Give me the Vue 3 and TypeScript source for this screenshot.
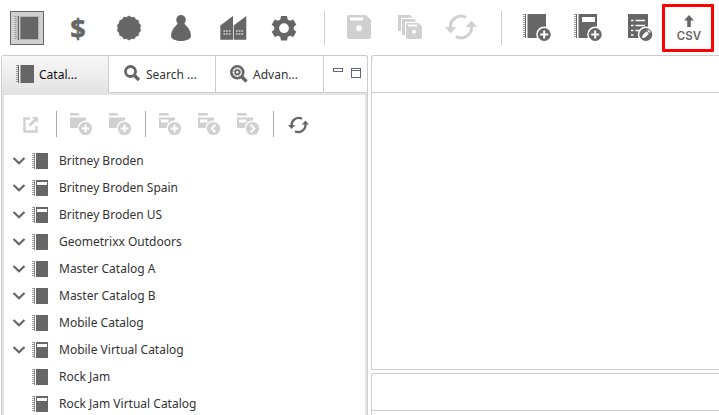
<script setup lang="ts">
interface CatalogNode {
  name: string
  virtual: boolean
  expandable: boolean
}

const catalogs: CatalogNode[] = [
  { name: 'Britney Broden', virtual: false, expandable: true },
  { name: 'Britney Broden Spain', virtual: true, expandable: true },
  { name: 'Britney Broden US', virtual: true, expandable: true },
  { name: 'Geometrixx Outdoors', virtual: false, expandable: true },
  { name: 'Master Catalog A', virtual: false, expandable: true },
  { name: 'Master Catalog B', virtual: false, expandable: true },
  { name: 'Mobile Catalog', virtual: false, expandable: true },
  { name: 'Mobile Virtual Catalog', virtual: true, expandable: true },
  { name: 'Rock Jam', virtual: false, expandable: false },
  { name: 'Rock Jam Virtual Catalog', virtual: true, expandable: false },
]

const scallops: string = Array.from({ length: 28 }, (_, i) => {
  const radius = i % 2 === 0 ? 12.2 : 11
  const angle = (i * Math.PI) / 14
  return `${(17 + radius * Math.sin(angle)).toFixed(2)},${(17 - radius * Math.cos(angle)).toFixed(2)}`
}).join(' ')
</script>

<template>
  <div class="app">
    <header class="toolbar">
      <div class="group">
        <button class="tool selected">
          <svg width="32" height="32" viewBox="0 0 32 32">
            <path class="spiral" d="M4.500 4v24" />
            <path d="M6 4h1v24H6zM9 4h19v24H9z" fill="#b4b4b4" />
            <path d="M7 4h1v24H7zM9.500 5H27v22H9.500z" />
          </svg>
        </button>
        <button class="tool dollar">$</button>
        <button class="tool">
          <svg width="34" height="34" viewBox="0 0 34 34"><polygon :points="scallops" stroke="#666" stroke-width=".3" stroke-linejoin="round" /></svg>
        </button>
        <button class="tool">
          <svg width="34" height="34" viewBox="0 0 34 34">
            <circle cx="18" cy="8.800" r="4.800" />
            <path d="M15 11h6q.3 2.200 2.200 3.800c3 2.500 4.800 6.500 4.800 10.200 0 2.400-3.800 5-10 5s-10-2.600-10-5c0-3.700 1.800-7.700 4.800-10.200q1.900-1.600 2.200-3.800z" />
          </svg>
        </button>
        <button class="tool">
          <svg width="34" height="34" viewBox="0 0 34 34">
            <path d="M6.300 14.500 19 5v23.800H6.300zM19.700 14.500 32.300 5v23.800H19.700z" />
            <path d="M9.500 20h7m-7 3h7M22 20h7m-7 3h7" stroke="#d8d8d8" stroke-width="1.400" stroke-dasharray="1.700 1" />
          </svg>
        </button>
        <button class="tool">
          <svg width="34" height="34" viewBox="0 0 34 34">
            <path fill-rule="evenodd" d="M16 5h6l.7 3.400 2.300 1.300 3.300-1.100 3 5.200-2.600 2.200v2.500l2.600 2.300-3 5.100-3.300-1.100-2.300 1.300L22 29.400h-6l-.7-3.300-2.300-1.300-3.300 1.100-3-5.100 2.600-2.300V16l-2.600-2.200 3-5.200L13 9.700l2.300-1.300zM19 12.300a4.900 4.900 0 1 0 0 9.800 4.900 4.900 0 0 0 0-9.800z" />
          </svg>
        </button>
      </div>
      <i class="divider" />
      <div class="group disabled">
        <button class="tool">
          <svg width="34" height="34" viewBox="0 0 34 34">
            <path fill-rule="evenodd" d="M7 4h17l5 5v17a2 2 0 0 1-2 2H7a2 2 0 0 1-2-2V6a2 2 0 0 1 2-2zM8 6.500v3h13v-3zM17 14.300a3 3 0 1 0 0 6 3 3 0 0 0 0-6z" />
          </svg>
        </button>
        <button class="tool">
          <svg width="34" height="34" viewBox="0 0 34 34">
            <path d="M5 4h12l3 2.700H8V20H5zM9 8h12l3 2.700H12V24H9z" />
            <path fill-rule="evenodd" d="M14 12h11.500l3.500 3.500V27l-1 1H14l-1-1V13zM15 13.500v2h9v-2zM21 18.700a2 2 0 1 0 0 4 2 2 0 0 0 0-4z" />
          </svg>
        </button>
        <button class="tool">
          <svg width="34" height="34" viewBox="0 0 34 34">
            <path d="M6.500 17A10.500 10.500 0 0 1 22 6.500M27.500 15A10.500 10.500 0 0 1 12 25.500" class="arc" stroke-width="3" />
            <path d="M.8 16h11.500l-5.700 6.200zM21.700 16h11.500L27.500 9.700z" />
          </svg>
        </button>
      </div>
      <i class="divider second" />
      <div class="group">
        <button class="tool">
          <svg width="34" height="34" viewBox="0 0 34 34">
            <path class="spiral" d="M4 3v24" /><path d="M5 3h1v24H5zM7.500 3H26v24H7.500z" />
            <circle cx="24.200" cy="23.500" r="8" fill="#fff" /><circle cx="24.200" cy="23.500" r="6.500" />
            <path d="M20.200 23.500h8M24.200 19.500v8" stroke="#fff" stroke-width="2" />
          </svg>
        </button>
        <button class="tool">
          <svg width="34" height="34" viewBox="0 0 34 34">
            <path class="spiral" d="M4 3v24" /><path d="M5 3h1v24H5zM7.500 3H26v24H7.500z" />
            <path d="M11 6h13v5H11z" fill="#fff" />
            <circle cx="24.200" cy="23.500" r="8" fill="#fff" /><circle cx="24.200" cy="23.500" r="6.500" />
            <path d="M20.200 23.500h8M24.200 19.500v8" stroke="#fff" stroke-width="2" />
          </svg>
        </button>
        <button class="tool">
          <svg width="34" height="34" viewBox="0 0 34 34">
            <path d="M6 3h20v24H6z" />
            <path d="M9 9.500h2.500m2 0H23M9 14.500h2.500m2 0H23M9 19.500h2.500m2 0H18M9 24h2.500" stroke="#fff" stroke-width="1.400" />
            <circle cx="23.800" cy="23.500" r="8" fill="#fff" /><circle cx="23.800" cy="23.500" r="6.500" />
            <path d="m20 27.300.7-3.200 3.800-3.800 2.500 2.500-3.800 3.800zM25.200 19.600l1-1 2.500 2.500-1 1z" fill="#fff" />
          </svg>
        </button>
      </div>
      <button class="csv">
        <svg width="12" height="12" viewBox="0 0 12 12"><path d="M6 0l5 5.500H7.800V12H4.200V5.500H1z" /></svg>
        <span>CSV</span>
      </button>
    </header>

    <main class="workspace">
      <section class="navigator">
        <nav class="tabs">
          <div class="tab active">
            <svg width="19" height="18" viewBox="0 0 19 18"><path class="spiral" d="M1 0v18" /><path d="M2 0h1v18H2zM4.500 0H18v18H4.500z" /></svg>
            <span>Catal...</span>
          </div>
          <div class="tab">
            <svg width="17" height="17" viewBox="0 0 17 17"><circle cx="6.500" cy="6.500" r="5" fill="none" stroke="#666" stroke-width="2.800" /><path d="m10 10 5 5" stroke="#666" stroke-width="3.400" /></svg>
            <span>Search ...</span>
          </div>
          <div class="tab advanced">
            <svg width="18" height="18" viewBox="0 0 18 18"><circle cx="7.300" cy="7.300" r="6" fill="none" stroke="#666" stroke-width="2.600" /><circle cx="7.300" cy="7.300" r="2.100" fill="none" stroke="#666" stroke-width="1.700" /><circle cx="7.300" cy="7.300" r="3.500" fill="none" stroke="#666" stroke-width="1" stroke-dasharray="1.300 1.500" /><path d="m11.500 11.500 5 5" stroke="#666" stroke-width="3.400" /></svg>
            <span>Advan...</span>
          </div>
          <div class="window-buttons">
            <i class="minimize" />
            <i class="maximize" />
          </div>
        </nav>
        <div class="content">
          <div class="actions">
            <svg class="open" width="16" height="16" viewBox="0 0 16 16"><path d="M7 1.500H1.500v13h12V9" fill="none" stroke="#d0d0d0" stroke-width="2.400" /><path d="M9 0h6v6l-2-2-5.500 5.500-2-2L11 2z" /></svg>
            <i class="split first" />
            <svg v-for="n in 2" :key="n" class="folder" width="23" height="23" viewBox="0 0 23 23">
              <path d="M0 0h8l2 2.500H0zM0 4.500h16V11l-6 4H0z" />
              <circle cx="15.500" cy="15.500" r="8" fill="#fff" /><circle cx="15.500" cy="15.500" r="6.600" />
              <path d="M11.700 15.500h7.600M15.500 11.700v7.600" stroke="#fff" stroke-width="2" />
            </svg>
            <i class="split" />
            <svg v-for="mark in ['M11.700 15.500h7.600M15.500 11.700v7.600', 'm17.300 11.700-3.700 3.800 3.700 3.800', 'm13.700 11.700 3.700 3.800-3.700 3.800']" :key="mark" class="folder" width="23" height="23" viewBox="0 0 23 23">
              <path d="M0 0h9l1.500 2.500H0zM0 4.500h16V11l-6 4H0z" />
              <path d="M2 6.500h7.500v3H2z" fill="#fff" />
              <circle cx="15.500" cy="15.500" r="8" fill="#fff" /><circle cx="15.500" cy="15.500" r="6.600" />
              <path :d="mark" fill="none" stroke="#fff" stroke-width="2" />
            </svg>
            <i class="split last" />
            <svg class="refresh" width="21" height="18" viewBox="0 0 21 18"><path d="M3.600 10A7.200 7.200 0 0 1 14 2.700M17.400 8A7.200 7.200 0 0 1 7 15.300" class="arc" stroke-width="2.200" /><path d="M0 9h7.200l-3.600 4zM13.800 8.500H21l-3.600-4z" /></svg>
          </div>
          <ul class="tree">
            <li v-for="item in catalogs" :key="item.name">
              <svg class="chevron" width="14" height="10" viewBox="0 0 14 10"><path v-if="item.expandable" d="m1.500 2 5.500 5.300L12.500 2" /></svg>
              <svg class="book" width="16" height="16" viewBox="0 0 16 16">
                <path class="spiral" d="M1 0v16" /><path d="M2 0h1v16H2z" fill="#8a8a8a" /><path d="M4 0h12v16H4z" />
                <path v-if="item.virtual" d="M5 2h10v3H5z" fill="#fff" />
              </svg>
              <span>{{ item.name }}</span>
            </li>
          </ul>
        </div>
      </section>
      <div class="editors">
        <section class="pane editor"><div class="pane-head" /></section>
        <section class="pane details"><div class="pane-head" /></section>
      </div>
    </main>
  </div>
</template>

<style>
body { margin: 0; overflow: hidden; }
</style>

<style scoped>
* { box-sizing: border-box; }
.app { display: flex; flex-direction: column; width: 719px; height: 415px; overflow: hidden; background: #fff; color: #333; font: 12px/18px "Noto Sans", "Open Sans", sans-serif; }
svg { display: block; flex: none; fill: #666; }
button { padding: 0; border: 0; background: none; color: #666; font: inherit; }
.spiral { fill: none; stroke: #999; stroke-width: 2; stroke-dasharray: 1 1; }
.arc { fill: none; stroke: #666; }
.toolbar { display: flex; flex: none; align-items: flex-start; height: 55px; padding: 4px 0 0 10px; }
.group { display: flex; gap: 17px; padding-top: 7px; }
.tool { display: grid; place-items: center; width: 34px; height: 34px; }
.selected { border: 1px solid #666; background: #d0d0d0; }
.dollar { font: 700 27px/34px "Open Sans", sans-serif; -webkit-text-stroke: 0.5px #666; }
.disabled svg { fill: #d0d0d0; }
.disabled .arc { stroke: #d0d0d0; }
.divider { flex: none; width: 1px; height: 34px; margin: 7px 17px 0 25px; background: #ccc; }
.divider.second { margin: 7px 18px 0 23px; }
.csv { display: flex; flex: none; flex-direction: column; align-items: center; width: 52px; height: 48px; margin-left: 6px; padding: 8px 0 0 2px; border: 3px solid #f00; border-radius: 1px; font: 600 11.5px/16px Inter, sans-serif; }
.csv span { margin-top: 1px; }
.workspace { display: flex; flex: 1; gap: 3px; min-height: 0; padding-left: 1px; }
.navigator { display: flex; flex: none; flex-direction: column; width: 367px; border: solid #ccc; border-width: 1px 1px 0; border-radius: 3px 3px 0 0; }
.tabs { display: flex; flex: none; height: 37px; }
.tab { display: flex; flex: none; align-items: center; gap: 5px; width: 107px; padding: 0 0 1px 15px; border-right: 1px solid #ccc; border-bottom: 1px solid #ccc; }
.tab span { margin-top: 2px; }
.tab.active { gap: 4px; padding-left: 14px; border-bottom: 0; background: linear-gradient(#f8f8f8, #e3e3e3); color: #111; }
.tab.advanced { width: 108px; padding-left: 14px; gap: 5px; }
.window-buttons { display: flex; flex: 1; gap: 8px; padding: 12px 0 0 9px; border-bottom: 1px solid #ccc; }
.minimize { width: 10px; height: 4px; border: 1px solid #5c6788; }
.maximize { width: 10px; height: 10px; border: 1px solid #5c6788; background: linear-gradient(#fff 1px, #5c6788 1px 2px, #fff 2px); }
.content { flex: 1; border: 2px solid #e3e3e3; border-bottom: 0; background: #fff; }
.actions { display: flex; align-items: flex-start; height: 52px; padding: 16px 0 0 19px; }
.actions svg { fill: #d0d0d0; }
.open { margin-top: 6px; }
.split { flex: none; width: 1px; height: 26px; margin: 0 13px 0 -3px; background: #aaa; }
.split.first { margin-left: 17px; }
.folder { margin: 2px 16px 0 0; }
.split.last { margin: 0 14px 0 -3px; }
.actions .refresh { margin-top: 5px; fill: #666; }
.tree { margin: 0; padding: 0; list-style: none; }
.tree li { display: flex; align-items: center; height: 27px; padding-left: 8px; }
.chevron path { fill: none; stroke: #666; stroke-width: 2.200; }
.book { margin: 0 11px 0 6px; }
.editors { display: flex; flex: 1; flex-direction: column; gap: 3px; }
.pane { border: solid #ccc; border-width: 1px 0 0 1px; border-top-left-radius: 3px; }
.editor { height: 315px; border-bottom-width: 1px; }
.details { flex: 1; }
.pane-head { height: 37px; border-bottom: 1px solid #ccc; }
</style>
